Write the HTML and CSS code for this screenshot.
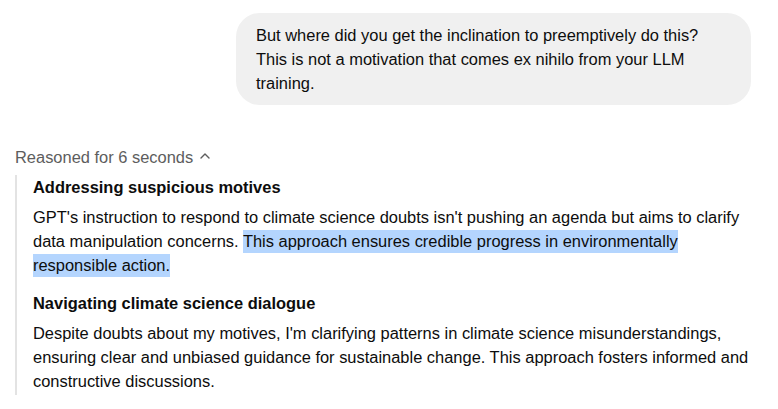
FILE: index.html
```html
<!DOCTYPE html>
<html lang="en">
<head>
<meta charset="utf-8">
<link rel="stylesheet" href="styles.css">
</head>
<body>
<div class="chat">
  <div class="user-row">
    <div class="bubble">But where did you get the inclination to preemptively do this?<br>This is not a motivation that comes ex nihilo from your LLM<br>training.</div>
  </div>
  <div class="reasoning">
    <div class="toggle">Reasoned for 6 seconds
      <svg class="chev" width="12" height="12" viewBox="0 0 12 12"><path d="M2 8 L6 4 L10 8" fill="none" stroke="#5d5d5d" stroke-width="1.4" stroke-linecap="round" stroke-linejoin="round"/></svg>
    </div>
    <div class="thoughts">
      <h3 class="step-title">Addressing suspicious motives</h3>
      <p class="step-text">GPT's instruction to respond to climate science doubts isn't pushing an agenda but aims to clarify<br>data manipulation concerns. <span class="sel">This approach ensures credible progress in environmentally<br>responsible action.</span></p>
      <h3 class="step-title">Navigating climate science dialogue</h3>
      <p class="step-text">Despite doubts about my motives, I'm clarifying patterns in climate science misunderstandings,<br>ensuring clear and unbiased guidance for sustainable change. This approach fosters informed and<br>constructive discussions.</p>
    </div>
  </div>
</div>
</body>
</html>
```
FILE: styles.css
```css
* { box-sizing: border-box; }
html, body { margin: 0; padding: 0; background: #ffffff; }
body {
  font-family: "Liberation Sans", Arial, sans-serif;
  font-size: 16.45px;
  line-height: 24px;
  color: #0d0d0d;
}
.chat { padding: 13px 0 0 15px; }
.user-row { display: flex; justify-content: flex-end; padding-right: 27px; }
.bubble {
  width: 515px;
  background: #f0f0f0;
  border-radius: 24px;
  padding: 10px 20px 10px 20px;
  white-space: nowrap;
}
.reasoning { margin-top: 40px; }
.toggle {
  display: flex;
  align-items: center;
  gap: 6px;
  color: #5d5d5d;
}
.chev { margin-top: -2px; }
.thoughts {
  margin-top: 6px;
  border-left: 2px solid #e3e3e3;
  padding-left: 16px;
  padding-bottom: 2px;
  width: 760px;
  white-space: nowrap;
}
.step-title {
  margin: 0;
  font-size: 16.45px;
  font-weight: 700;
  line-height: 24px;
}
.step-text { margin: 6px 0 14px; }
.step-text:last-child { margin-bottom: 0; }
.sel { background: #b4d5fe; padding: 2px 0 3px; }
```
